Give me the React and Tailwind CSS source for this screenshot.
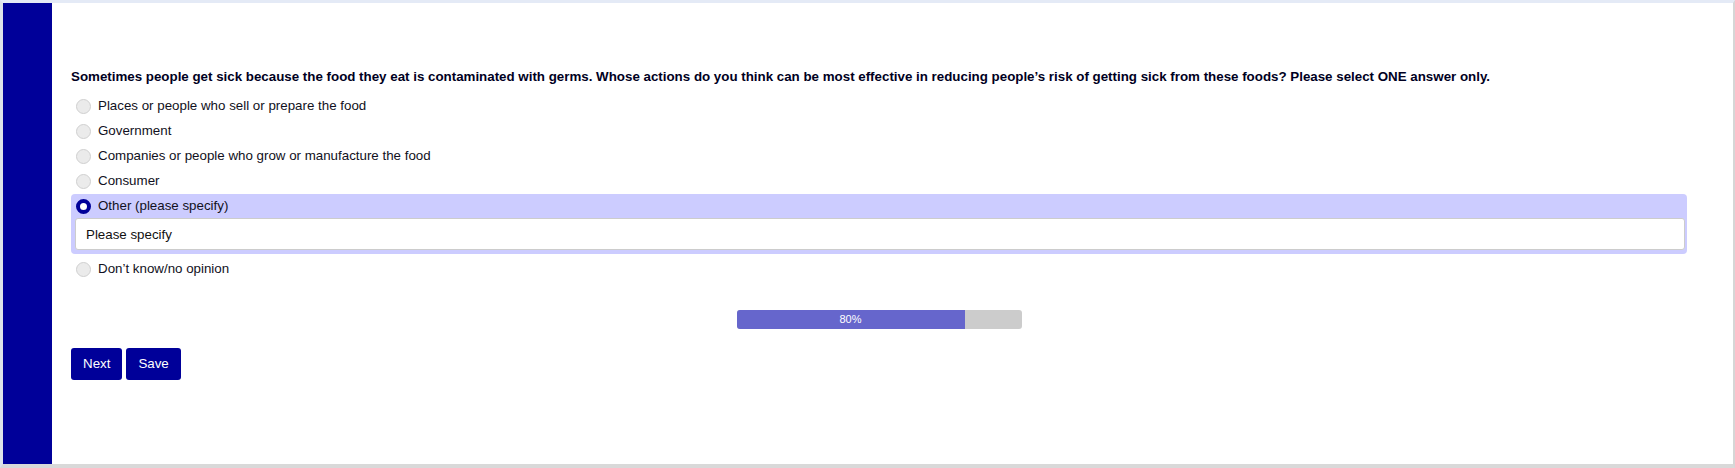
const options = [
  'Places or people who sell or prepare the food',
  'Government',
  'Companies or people who grow or manufacture the food',
  'Consumer',
];

function Radio({ checked }) {
  if (checked) {
    return <span className="w-[15px] h-[15px] rounded-full border-[4px] border-[#000099] bg-white shrink-0" />;
  }
  return <span className="w-[15px] h-[15px] rounded-full border border-[#d0d0d0] bg-[#ebebeb] shrink-0" />;
}

function Option({ label, checked }) {
  return (
    <label className="h-[24px] flex items-center gap-[7px] px-[5px] text-[13.33px] text-[#111122] cursor-pointer">
      <Radio checked={checked} />
      <span>{label}</span>
    </label>
  );
}

export default function App() {
  const progress = 80;

  return (
    <div
      className="w-[1735px] h-[468px] flex bg-white border-t-[3px] border-t-[#e4eaf6] border-l-[3px] border-l-[#dde2ea] border-r-2 border-r-[#d6d6d6] border-b-4 border-b-[#d9d9d9]"
      style={{ fontFamily: '"Liberation Sans", Arial, sans-serif' }}
    >
      <div className="w-[49px] bg-[#000099] shrink-0" />

      <div className="flex-1 flex flex-col pl-[19px] pr-[46px] pt-[65px]">
        <p className="text-[13.33px] leading-[18px] font-bold text-[#000022] mb-[8px]">
          Sometimes people get sick because the food they eat is contaminated with germs. Whose actions do you think can be most effective in reducing people’s risk of getting sick from these foods? Please select ONE answer only.
        </p>

        <div className="flex flex-col gap-[1px]">
          {options.map((o) => (
            <Option key={o} label={o} />
          ))}

          <div className="bg-[#ccccff] rounded-[4px] pl-[4px] pr-[2px] pb-[4px]">
            <div className="-ml-[4px]">
              <Option label="Other (please specify)" checked />
            </div>
            <input
              type="text"
              placeholder="Please specify"
              className="w-full h-[32px] bg-white border border-[#cccccc] rounded-[3px] px-[10px] text-[13.33px] text-[#111] placeholder:text-[#111] outline-none"
            />
          </div>

          <div className="mt-[2px]">
            <Option label="Don’t know/no opinion" />
          </div>
        </div>

        <div className="mx-auto mt-[29px] w-[285px] h-[19px] bg-[#cccccc] rounded-[3px] overflow-hidden flex">
          <div
            className="h-full bg-[#6666cc] flex items-center justify-center text-[11px] text-white"
            style={{ width: `${progress}%` }}
          >
            {progress}%
          </div>
        </div>

        <div className="flex gap-[4px] mt-[19px]">
          <button className="h-[32px] px-[12px] bg-[#000099] text-white text-[13.33px] rounded-[3px]">Next</button>
          <button className="h-[32px] px-[12px] bg-[#000099] text-white text-[13.33px] rounded-[3px]">Save</button>
        </div>
      </div>
    </div>
  );
}
